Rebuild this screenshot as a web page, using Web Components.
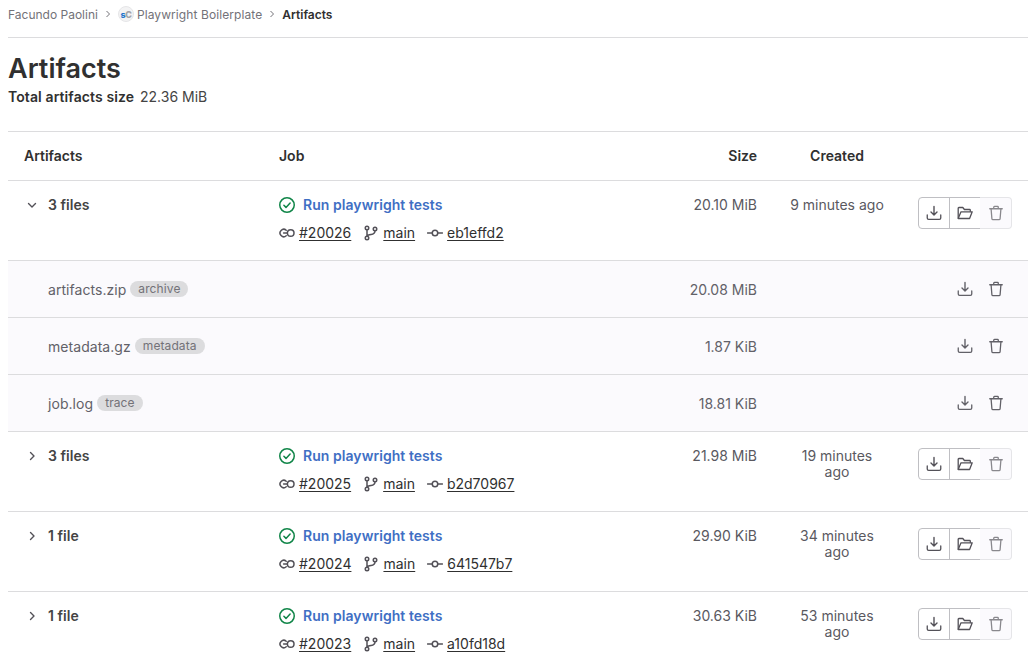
<!DOCTYPE html>
<html>
<head>
<meta charset="utf-8">
<title>Artifacts</title>
<style>
  html, body { margin: 0; background: #fff; }
  body { font-family: Inter, "Noto Sans", sans-serif; color: #303030; height: 660px; overflow: hidden; }
</style>
</head>
<body>
<artifacts-page>
  <bread-crumbs slot="crumbs"></bread-crumbs>
  <artifacts-table>
    <artifact-row files="3 files" open job="#20026" commit="eb1effd2" size="20.10 MiB" created="9 minutes ago"></artifact-row>
    <file-row name="artifacts.zip" tag="archive" size="20.08 MiB"></file-row>
    <file-row name="metadata.gz" tag="metadata" size="1.87 KiB"></file-row>
    <file-row name="job.log" tag="trace" size="18.81 KiB"></file-row>
    <artifact-row files="3 files" job="#20025" commit="b2d70967" size="21.98 MiB" created="19 minutes ago"></artifact-row>
    <artifact-row files="1 file" job="#20024" commit="641547b7" size="29.90 KiB" created="34 minutes ago"></artifact-row>
    <artifact-row files="1 file" job="#20023" commit="a10fd18d" size="30.63 KiB" created="53 minutes ago"></artifact-row>
  </artifacts-table>
</artifacts-page>

<script>
// Icons redrawn on a 16 unit grid
const ICONS = {
  chevronDown: '<path d="M4.5 6.5l3.5 3.5 3.5-3.5" fill="none" stroke="currentColor" stroke-width="1.4" stroke-linecap="round" stroke-linejoin="round"/>',
  chevronRight: '<path d="M6.5 4.5l3.5 3.5-3.5 3.5" fill="none" stroke="currentColor" stroke-width="1.4" stroke-linecap="round" stroke-linejoin="round"/>',
  check: '<circle cx="8" cy="8" r="7.25" fill="none" stroke="currentColor" stroke-width="1.5"/><path d="M4.9 8.3l2.1 2.1 4.1-4.4" fill="none" stroke="currentColor" stroke-width="1.5" stroke-linecap="round" stroke-linejoin="round"/>',
  job: '<path d="M7.2 5.2A3.7 3.7 0 1 0 7.2 10.8" fill="none" stroke="currentColor" stroke-width="1.5" stroke-linecap="round"/><path d="M4.6 8h3.2" stroke="currentColor" stroke-width="1.5" stroke-linecap="round"/><circle cx="11.7" cy="8" r="3.3" fill="none" stroke="currentColor" stroke-width="1.5"/>',
  branch: '<circle cx="4" cy="3" r="1.75" fill="none" stroke="currentColor" stroke-width="1.5"/><circle cx="4" cy="13" r="1.75" fill="none" stroke="currentColor" stroke-width="1.5"/><circle cx="12" cy="4" r="1.75" fill="none" stroke="currentColor" stroke-width="1.5"/><path d="M4 4.8v6.4M12 5.8c0 3-2 3.5-4 3.7-2 .2-3.6.6-4 1.7" fill="none" stroke="currentColor" stroke-width="1.5"/>',
  commit: '<circle cx="8" cy="8" r="2.75" fill="none" stroke="currentColor" stroke-width="1.5"/><path d="M0.5 8h4.7M10.8 8h4.7" stroke="currentColor" stroke-width="1.5" stroke-linecap="round"/>',
  download: '<path d="M8 1.5v8.4M5 7L8 9.9 11 7" fill="none" stroke="currentColor" stroke-width="1.4" stroke-linecap="round" stroke-linejoin="round"/><path d="M1.25 10v3c0 .8.6 1.4 1.4 1.4h10.7c.8 0 1.4-.6 1.4-1.4v-3" fill="none" stroke="currentColor" stroke-width="1.3" stroke-linecap="round" stroke-linejoin="round"/>',
  folder: '<path d="M1.2 13.5V3.2c0-.4.3-.7.7-.7h3.9l1.6 2h5.2c.4 0 .7.3.7.7v1.6" fill="none" stroke="currentColor" stroke-width="1.3" stroke-linejoin="round"/><path d="M1.2 13.5h11.4l2.6-6.7H4z" fill="none" stroke="currentColor" stroke-width="1.3" stroke-linejoin="round"/>',
  trash: '<path d="M1.75 3.75h12.5M5.75 3.5V2.1c0-.4.3-.7.7-.7h3.1c.4 0 .7.3.7.7v1.4" fill="none" stroke="currentColor" stroke-width="1.3" stroke-linecap="round"/><path d="M3.1 4l.8 9.7c.05.6.55 1 1.1 1h6c.55 0 1.05-.4 1.1-1l.8-9.7" fill="none" stroke="currentColor" stroke-width="1.3"/>',
};

class GlIcon extends HTMLElement {
  connectedCallback() {
    const size = this.getAttribute('size') || 16;
    this.attachShadow({ mode: 'open' }).innerHTML = `
      <style>
      :host { display: inline-flex; flex: none; width: ${size}px; height: ${size}px; }
      svg { display: block; width: 100%; height: 100%; }
      </style>
      <svg viewBox="0 0 16 16">${ICONS[this.getAttribute('name')]}</svg>
    `;
  }
}

class BreadCrumbs extends HTMLElement {
  constructor() {
    super();
    this.attachShadow({ mode: 'open' }).innerHTML = `
      <style>
      :host {
        display: flex;
        align-items: center;
        height: 28px;
        padding-bottom: 9px;
        border-bottom: 1px solid #dcdcde;
        font-size: 12px;
        color: #737278;
      }
      .sep { width: 20px; }
      .sep svg { display: block; margin: 0 auto; width: 8px; height: 8px; }
      .avatar {
        width: 16px;
        height: 16px;
        margin-right: 3px;
        border-radius: 50%;
        background: #f3f3f4;
        border: 1px solid #e6e6e8;
        box-sizing: border-box;
        display: flex;
        align-items: center;
        justify-content: center;
        font-size: 9px;
        font-weight: 800;
        line-height: 1;
        letter-spacing: -0.4px;
      }
      .avatar b { color: #1f75cb; font-weight: 800; }
      .avatar i { color: #a4a3a8; font-style: normal; }
      .project { letter-spacing: 0.09px; }
      .current { color: #303030; font-weight: 600; }
      </style>
      <span>Facundo Paolini</span>
      <span class="sep"><svg viewBox="0 0 8 8"><path d="M2.5 1l3 3-3 3" fill="none" stroke="currentColor" stroke-width="1"/></svg></span>
      <span class="avatar"><b>s</b><i>C</i></span>
      <span class="project">Playwright Boilerplate</span>
      <span class="sep"><svg viewBox="0 0 8 8"><path d="M2.5 1l3 3-3 3" fill="none" stroke="currentColor" stroke-width="1"/></svg></span>
      <span class="current">Artifacts</span>
    `;
  }
}

class ArtifactsPage extends HTMLElement {
  constructor() {
    super();
    this.attachShadow({ mode: 'open' }).innerHTML = `
      <style>
      :host { display: block; padding: 0 6px 0 8px; }
      h1 { margin: 0; padding-top: 12px; font-size: 27px; line-height: 37px; font-weight: 600; color: #303030; }
      p { margin: 0 0 24px; font-size: 14px; line-height: 20px; color: #444; }
      b { font-weight: 600; color: #303030; letter-spacing: 0.1px; margin-right: 2px; }
      </style>
      <slot name="crumbs"></slot>
      <h1>Artifacts</h1>
      <p><b>Total artifacts size</b> 22.36 MiB</p>
      <slot></slot>
    `;
  }
}

class ArtifactsTable extends HTMLElement {
  constructor() {
    super();
    this.attachShadow({ mode: 'open' }).innerHTML = `
      <style>
      :host { display: block; font-size: 14px; border-top: 1px solid #dcdcde; }
      .head {
        display: grid;
        grid-template-columns: 255px 1fr 153px 128px 127px;
        align-items: center;
        height: 46px;
        padding-bottom: 2px;
        font-weight: 600;
        color: #303030;
        border-bottom: 1px solid #dcdcde;
      }
      .head span { padding: 0 16px; }
      .size { text-align: right; }
      .created { text-align: center; }
      </style>
      <div class="head">
        <span>Artifacts</span>
        <span>Job</span>
        <span class="size">Size</span>
        <span class="created">Created</span>
        <span></span>
      </div>
      <slot></slot>
    `;
  }
}

class ArtifactRow extends HTMLElement {
  constructor() {
    super();
    this.attachShadow({ mode: 'open' });
  }

  connectedCallback() {
    const attr = (name) => this.getAttribute(name);
    this.shadowRoot.innerHTML = `
      <style>
      :host {
        display: grid;
        grid-template-columns: 255px 1fr 153px 128px 127px;
        height: 79px;
        border-bottom: 1px solid #dcdcde;
        font-size: 14px;
        line-height: 16px;
        color: #303030;
      }
      .cell { padding: 16px 16px 0; }
      .files { display: flex; align-items: flex-start; gap: 8px; font-weight: 600; color: #444; letter-spacing: 0.05px; }
      .files gl-icon { color: #535158; }
      .name { display: flex; align-items: center; gap: 8px; font-weight: 600; color: #3f6fc4; letter-spacing: 0.05px; }
      .name gl-icon { color: #108548; }
      .meta { display: flex; align-items: center; margin-top: 12px; height: 16px; }
      .meta gl-icon { color: #535158; margin-right: 4px; }
      .meta span { margin-right: 12px; display: flex; align-items: center; }
      .meta u { color: #303030; text-underline-offset: 2px; }
      .size { text-align: right; color: #5a595f; }
      .created { text-align: center; color: #5a595f; }
      .actions { padding: 16px 16px 0 17px; display: flex; }
      .actions button {
        width: 32px;
        height: 32px;
        margin-left: -1px;
        padding: 0;
        display: flex;
        align-items: center;
        justify-content: center;
        background: #fff;
        border: 1px solid #bfbfc3;
        color: #535158;
      }
      .actions button:first-child { margin-left: 0; border-radius: 4px 0 0 4px; }
      .actions button:last-child {
        border-radius: 0 4px 4px 0;
        background: #fbfafd;
        border-color: #e5e5e8;
        border-left: 0;
        color: #89888d;
      }
      </style>
      <div class="cell files"><gl-icon name="${this.hasAttribute('open') ? 'chevronDown' : 'chevronRight'}"></gl-icon>${attr('files')}</div>
      <div class="cell">
        <div class="name"><gl-icon name="check"></gl-icon>Run playwright tests</div>
        <div class="meta">
          <span><gl-icon name="job"></gl-icon><u>${attr('job')}</u></span>
          <span><gl-icon name="branch"></gl-icon><u>main</u></span>
          <span><gl-icon name="commit"></gl-icon><u>${attr('commit')}</u></span>
        </div>
      </div>
      <div class="cell size">${attr('size')}</div>
      <div class="cell created">${attr('created')}</div>
      <div class="actions">
        <button><gl-icon name="download"></gl-icon></button>
        <button><gl-icon name="folder"></gl-icon></button>
        <button><gl-icon name="trash"></gl-icon></button>
      </div>
    `;
  }
}

class FileRow extends HTMLElement {
  connectedCallback() {
    const attr = (name) => this.getAttribute(name);
    this.attachShadow({ mode: 'open' }).innerHTML = `
      <style>
      :host {
        display: grid;
        grid-template-columns: 1fr 153px 128px 127px;
        align-items: center;
        height: 56px;
        background: #fbfafd;
        border-bottom: 1px solid #dcdcde;
        font-size: 14px;
        color: #626168;
      }
      .name { display: flex; align-items: center; padding-left: 40px; gap: 4px; letter-spacing: 0.05px; }
      .tag {
        font-size: 12px;
        line-height: 16px;
        padding: 0 8px;
        border-radius: 8px;
        background: #dcdcde;
        color: #737278;
        letter-spacing: 0.1px;
      }
      .size { text-align: right; padding-right: 16px; }
      .actions { grid-column: 4; display: flex; justify-content: flex-end; gap: 15px; padding-right: 24px; color: #626168; }
      </style>
      <div class="name">${attr('name')}<span class="tag">${attr('tag')}</span></div>
      <div class="size">${attr('size')}</div>
      <div class="actions"><gl-icon name="download"></gl-icon><gl-icon name="trash"></gl-icon></div>
    `;
  }
}

customElements.define('gl-icon', GlIcon);
customElements.define('bread-crumbs', BreadCrumbs);
customElements.define('artifacts-page', ArtifactsPage);
customElements.define('artifacts-table', ArtifactsTable);
customElements.define('artifact-row', ArtifactRow);
customElements.define('file-row', FileRow);
</script>
</body>
</html>
